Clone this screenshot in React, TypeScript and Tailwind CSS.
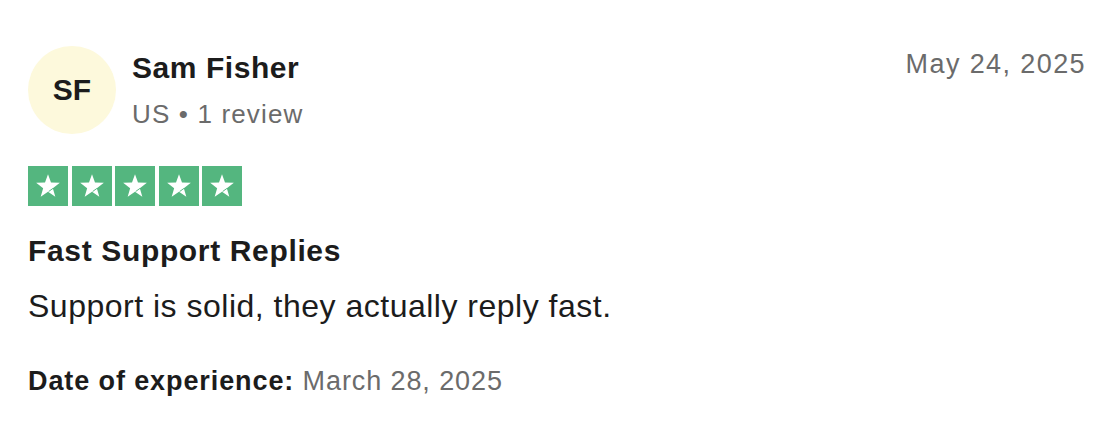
import React from "react";

function Star() {
  return (
    <div className="w-10 h-10 bg-[#54b67f] flex items-center justify-center">
      <svg width="26" height="26" viewBox="0 0 24 24">
        <polygon
          fill="#ffffff"
          points="12,1.1 14.76,8.8 22.94,9.05 16.47,14.05 18.76,21.9 12,17.3 5.24,21.9 7.53,14.05 1.06,9.05 9.24,8.8"
        />
        <line x1="16.6" y1="14.2" x2="12.6" y2="17.1" stroke="#54b67f" strokeWidth="0.9" />
      </svg>
    </div>
  );
}

export default function App() {
  return (
    <div className="bg-white w-[1108px] h-[428px] pt-[46px] pl-[28px] pr-[22px] font-['Liberation_Sans',Arial,sans-serif] text-[#1c1c1c]">
      <div className="flex items-start">
        <div className="w-[88px] h-[88px] rounded-full bg-[#fdf9dc] flex items-center justify-center shrink-0">
          <span className="text-[30px] font-bold leading-none">SF</span>
        </div>
        <div className="ml-[16px] flex-1">
          <div className="mt-[4px] text-[30px] font-bold leading-[36px] tracking-[0.55px]">Sam Fisher</div>
          <div className="mt-[12px] text-[26px] leading-[32px] tracking-[1.15px] text-[#6b6b6b]">
            US • 1 review
          </div>
        </div>
        <div className="mt-[2px] text-[27px] leading-[32px] tracking-[1.4px] text-[#6b6b6b]">
          May 24, 2025
        </div>
      </div>

      <div className="mt-[32px] flex gap-[3.5px]">
        {[...Array(5)].map((_, i) => (
          <Star key={i} />
        ))}
      </div>

      <div className="mt-[27px] text-[30px] font-bold leading-[36px] tracking-[0.65px]">
        Fast Support Replies
      </div>
      <div className="mt-[17px] text-[32px] leading-[40px] tracking-[0.5px]">
        Support is solid, they actually reply fast.
      </div>
      <div className="mt-[39px] text-[27px] leading-[32px] tracking-[0.9px]">
        <span className="font-bold">Date of experience:</span>{" "}
        <span className="text-[#6b6b6b]">March 28, 2025</span>
      </div>
    </div>
  );
}
